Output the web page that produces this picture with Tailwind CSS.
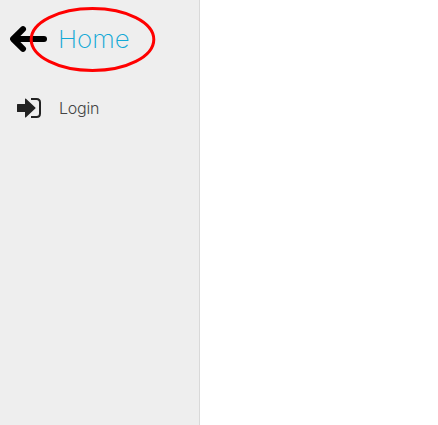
<!DOCTYPE html>
<html lang="en">
<head>
<meta charset="utf-8">
<title>Home</title>
<script src="https://cdn.jsdelivr.net/npm/@tailwindcss/browser@4"></script>
</head>
<body class="h-screen overflow-hidden bg-white font-['Inter','Lato',sans-serif] font-light">
<aside class="relative h-full w-[200px] border-r border-[#d9d9d9] bg-[#eeeeee]">
  <nav class="flex flex-col">
    <a class="flex h-[78px] items-center pl-2.5">
      <svg class="h-[26px] w-[37px] shrink-0" viewBox="0 0 37 26" fill="none" stroke="#000" stroke-width="6" stroke-linecap="round" stroke-linejoin="round"><path d="M34 13H5"/><path d="M13 3.2L3.1 13L13 22.8"/></svg>
      <span class="ml-[11px] mt-0.5 origin-left scale-x-[1.08] text-[24px] leading-8 font-extralight text-[#12a9d6]">Home</span>
    </a>
    <a class="flex h-[60px] items-center pl-[17px]">
      <svg class="h-5 w-6 shrink-0" viewBox="0 0 24 20"><path fill="#222" d="M0 6.6Q0 6 .6 6H8V1Q8 0 9 .8L18.3 9.4Q19 10 18.3 10.6L9 19.2Q8 20 8 19V14H.6Q0 14 0 13.4Z"/><path fill="none" stroke="#222" stroke-width="2" d="M14 1H19.5Q23 1 23 4.5V15.5Q23 19 19.5 19H14"/></svg>
      <span class="ml-[18px] text-base leading-6 tracking-[-0.2px] text-[#444]">Login</span>
    </a>
  </nav>
  <svg class="pointer-events-none absolute left-7 top-1.5 h-[68px] w-[130px]" viewBox="28 6 130 68" fill="none"><ellipse cx="92.5" cy="39.5" rx="61.3" ry="31" stroke="#f00" stroke-width="3"/></svg>
</aside>
</body>
</html>
